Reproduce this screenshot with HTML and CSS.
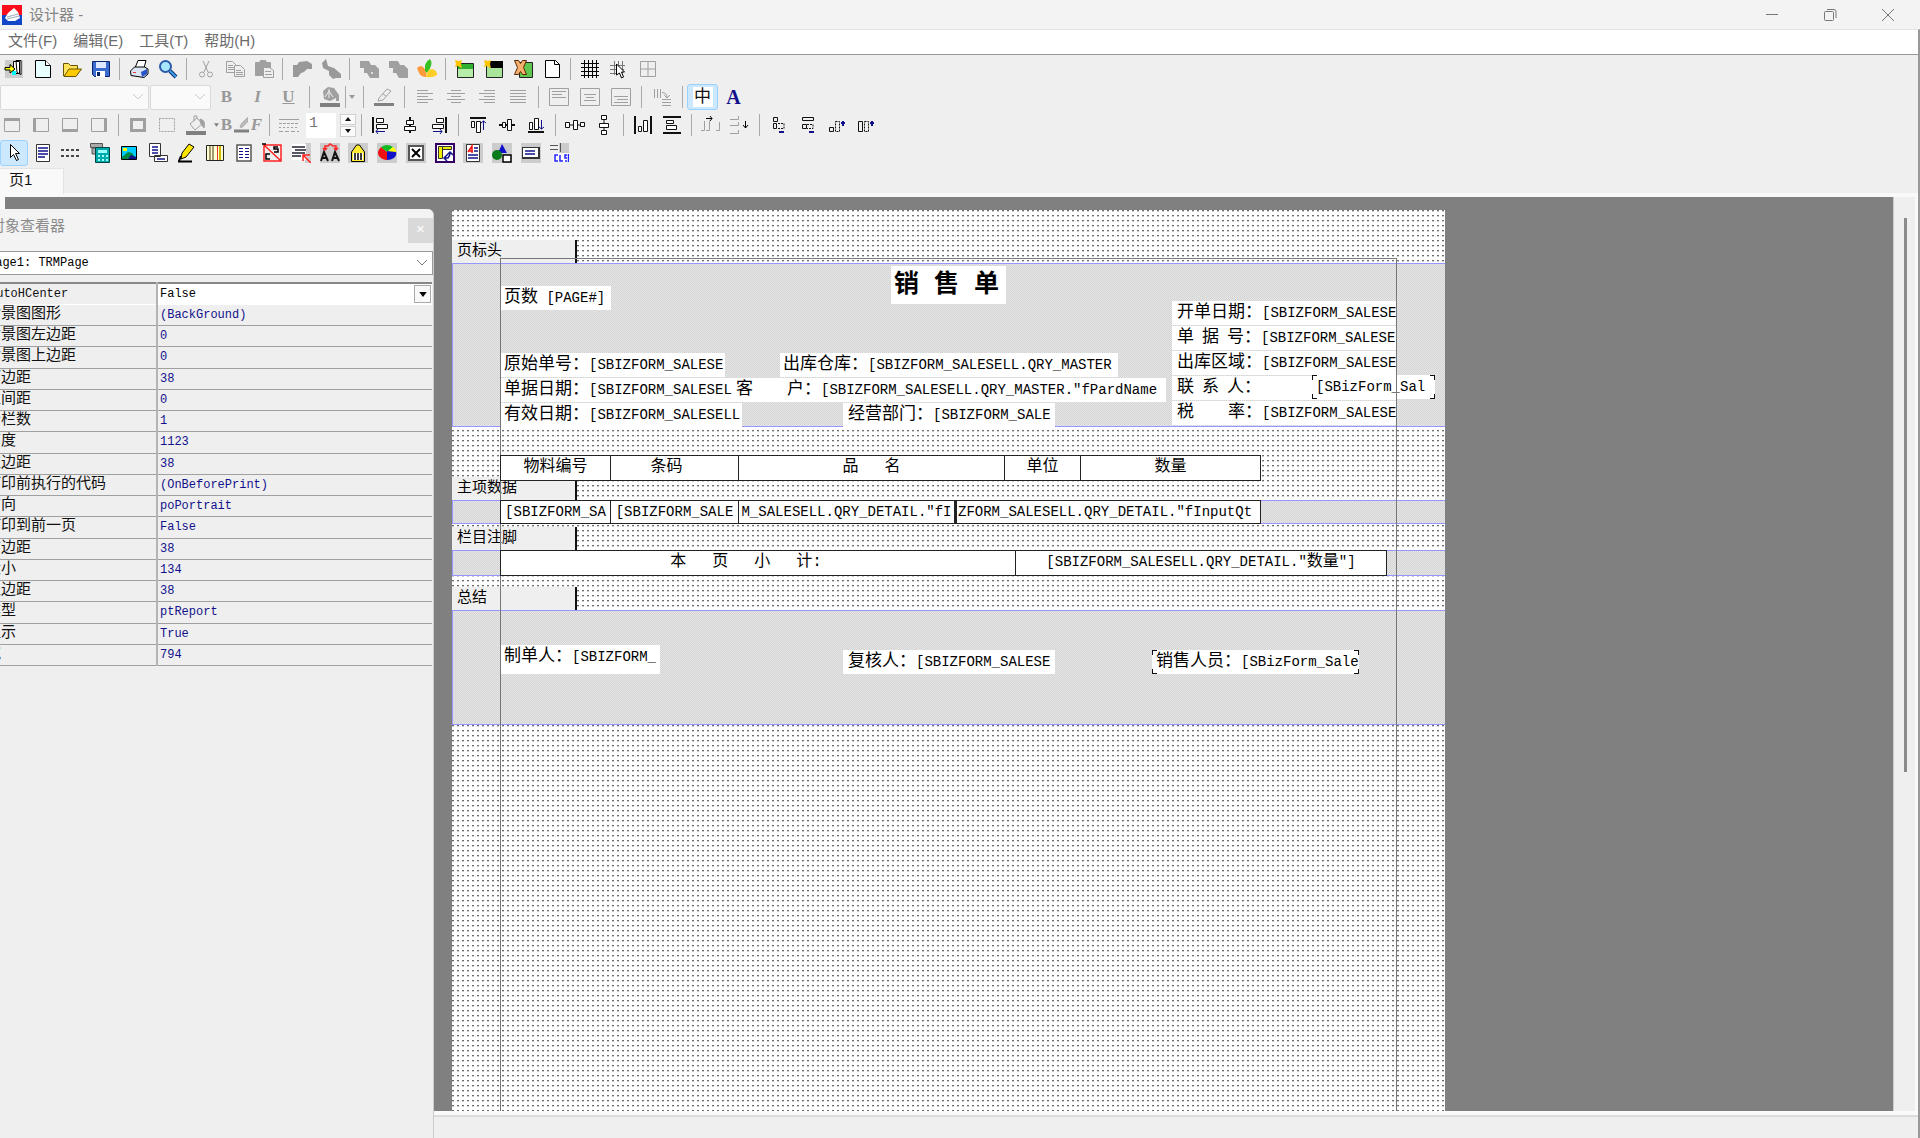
FILE: index.html
```html
<!DOCTYPE html>
<html lang="zh-CN">
<head>
<meta charset="utf-8">
<title>设计器</title>
<link rel="stylesheet" href="styles.css">
</head>
<body>
<header class="titlebar">
  <svg class="logo" viewBox="0 0 20 20"><path fill="#fb0d1b" d="M0 0h20v11H0z"/><path fill="#1446c8" d="M0 10h20v10H0z"/><path fill="#fff" d="M3 13 6 8l6-5 4 4 2 6-5 3H6z"/><path stroke="#9ab" d="m5 12 11-3M5 14l12-3"/></svg>
  <h1>设计器 -</h1>
  <div class="winbtns">
    <button aria-label="最小化"><svg class="ico" viewBox="0 0 20 20"><path stroke="#777" d="M4 9.500h12"/></svg></button>
    <button aria-label="还原"><svg class="ico" viewBox="0 0 20 20"><rect x="4.500" y="6.500" width="9" height="9" rx="1" stroke="#777"/><path stroke="#777" d="M7 4.500h7q2 0 2 2V13"/></svg></button>
    <button aria-label="关闭"><svg class="ico" viewBox="0 0 20 20"><path stroke="#777" d="m4 4 12 12M16 4 4 16"/></svg></button>
  </div>
</header>
<div class="window">
<nav class="menu"><a href="#file">文件(F)</a><a href="#edit">编辑(E)</a><a href="#tools">工具(T)</a><a href="#help">帮助(H)</a></nav>

<div class="toolbars">
  <div class="bar standard">
    <button aria-label="退出"><svg class="ico" viewBox="0 0 20 20"><path fill="#ccc" d="M1 1h18v18H1z"/><path fill="#fff" stroke="#000" d="M9.500 2.500h6v12h-6zM12 1.500h5v14l-4-2z"/><path fill="#0ff" d="M8 12h4v4H8z"/><path fill="#ff0" stroke="#000" d="M1 8.500h5v-3l5 4.500-5 4v-3H1z"/></svg></button>
    <button aria-label="新建"><svg class="ico" viewBox="0 0 20 20"><path fill="#e8ffff" stroke="#000" d="M2.500 1.500h10l5 5v12h-15z"/><path fill="#fff" stroke="#000" d="M12.500 1.500v5h5"/></svg></button>
    <button aria-label="打开"><svg class="ico" viewBox="0 0 20 20"><path fill="#ffe45a" stroke="#6b5400" d="M1.500 17V4.500h5l2 2h7V10"/><path fill="#fc0" stroke="#6b5400" d="m2 17.500 5-7.500h12.500L14 17.500z"/></svg></button>
    <button aria-label="保存"><svg class="ico" viewBox="0 0 20 20"><path fill="#3c6bd0" stroke="#0a2468" d="M1.500 2.500h17v15h-15l-2-2z"/><path fill="#dce9ff" d="M5 3h10v6H5z"/><path fill="#fff" d="M5 12h9v6H5z"/><path fill="#0a2468" d="M6 13h3v4H6z"/></svg></button>
    <i class="sep"></i>
    <button aria-label="打印"><svg class="ico" viewBox="0 0 20 20"><path fill="#fff" stroke="#000" d="M6 9 9 1.500h8L15 9"/><path fill="#dde6f5" stroke="#000" d="m1.500 12 4-4h10l3.500 2v5l-4 3.500-13-2z"/><path fill="#2856c8" d="m12 13 6-3v5l-5 3z"/><path stroke="#e33" d="M4 13.500h3"/></svg></button>
    <button aria-label="预览"><svg class="ico" viewBox="0 0 20 20"><path stroke="#123a78" stroke-width="4" d="m12 12 6 6"/><path stroke="#3c9be8" stroke-width="2" d="m12 12 6 6"/><circle cx="7.500" cy="7.500" r="5.500" fill="#a8e8ff" stroke="#2a5aa8" stroke-width="2"/></svg></button>
    <i class="sep"></i>
    <button aria-label="剪切" disabled><svg class="ico dis" viewBox="0 0 20 20"><path d="m7 2 5 11M13 2 8 13"/><circle cx="6" cy="15.500" r="2.500"/><circle cx="14" cy="15.500" r="2.500"/></svg></button>
    <button aria-label="复制" disabled><svg class="ico dis" viewBox="0 0 20 20"><path d="M1.500 2.500h6l3 3v8h-9zM3 6.500h5M3 8.500h6M3 10.500h6"/><path fill="#eee" d="M9.500 6.500h6l4 4v7h-10zM11 11.500h5M11 13.500h7M11 15.500h7"/></svg></button>
    <button aria-label="粘贴" disabled><svg class="ico dis" viewBox="0 0 20 20"><path fill="#a0a0a0" d="M1.500 3.500h4l1-2h5l1 2h4v13h-15z"/><path fill="#eee" d="M9.500 8.500h6l4 3v7h-10zM11 12.500h6M11 15.500h7"/></svg></button>
    <i class="sep"></i>
    <button aria-label="撤销" disabled><svg class="ico" viewBox="0 0 20 20"><path fill="#999" d="M1 6h4l2-3 8-1 5 3v5h-5l-3 3-3 1-3 4H1z"/></svg></button>
    <button aria-label="重做" disabled><svg class="ico" viewBox="0 0 20 20"><path fill="#999" d="m1 4 4-4 2 7 6 2 7 6v4h-5l-3 1-4-4v-4L2 9z"/></svg></button>
    <i class="sep"></i>
    <button aria-label="置前" disabled><svg class="ico" viewBox="0 0 20 20"><path fill="#a0a0a0" d="M1 2h9l2 4h4l4 4v9h-9l-3-5H5V9H1z"/><path fill="#ddd" d="M12 13h2v2h-2z"/></svg></button>
    <button aria-label="置后" disabled><svg class="ico" viewBox="0 0 20 20"><path fill="#a0a0a0" d="M1 2h9l2 4h4l4 4v9h-9l-3-5H5V9H1z"/></svg></button>
    <button aria-label="选项"><svg class="ico" viewBox="0 0 20 20"><path fill="#ff9a3c" d="M0 9q4-4 7 0 3 4 2 9-5 0-7-4z"/><path fill="#35c020" d="M8 12Q7 3 13 0q4 5-3 14z"/><path fill="#ffcf28" d="M9 18q1-8 6-8 5 1 5 6-4 3-11 2z"/></svg></button>
    <i class="sep"></i>
    <button aria-label="新报表页"><svg class="ico" viewBox="0 0 20 20"><path fill="#b4eca8" stroke="#222" d="M2.500 4.500h16v14h-16z"/><path fill="#2fae2f" d="M3 5h15v5H3z"/><path fill="#ffc400" d="m0 1 4 1 3-1-1 4 1 4-4-2-3 1 1-3z"/></svg></button>
    <button aria-label="新对话框"><svg class="ico" viewBox="0 0 20 20"><path fill="#a8e49a" stroke="#222" d="M2.500 4.500h16v14h-16z"/><path fill="#000" d="M6 2h13v7H6z"/><path fill="#ffc400" d="m0 1 4 1 3-1-1 4 1 4-4-2-3 1 1-3z"/></svg></button>
    <button aria-label="删除页"><svg class="ico" viewBox="0 0 20 20"><path fill="#60c850" stroke="#222" d="M6.500 3.500h13v15h-13z"/><path fill="#f5b070" stroke="#5a2800" d="M1.500 1.500h4l2 3 2-3h4l-3 7 3 7h-4l-2-3-2 3h-4l3-7z"/></svg></button>
    <button aria-label="页设置"><svg class="ico" viewBox="0 0 20 20"><path fill="#fff" stroke="#000" d="M3.500 1.500h10l4 4v13h-14z"/><path stroke="#000" d="M12.500 1.500v4h5"/></svg></button>
    <i class="sep"></i>
    <button aria-label="网格"><svg class="ico" viewBox="0 0 20 20"><path stroke="#000" d="M4.500 1v18M8.500 1v18M12.500 1v18M16.500 1v18M1 4.500h18M1 8.500h18M1 12.500h18M1 16.500h18"/></svg></button>
    <button aria-label="对齐网格"><svg class="ico" viewBox="0 0 20 20"><path stroke="#777" d="M5.500 2v14M9.500 2v12M13.500 2v12M1 6.500h15M1 10.500h14M1 14.500h8"/><path fill="#fff" stroke="#000" d="m7.500 5 8 8h-3l2 5-2 1-2-5-3 2z"/></svg></button>
    <button aria-label="适应网格" disabled><svg class="ico dis" viewBox="0 0 20 20"><path d="M2.500 2.500h15v15h-15zM10 3v14M3 10h14"/></svg></button>
  </div>

  <div class="bar format">
    <select class="fontname" aria-label="字体" disabled><option></option></select>
    <select class="fontsize" aria-label="字号" disabled><option></option></select>
    <button class="letter bold" disabled>B</button>
    <button class="letter ital" disabled>I</button>
    <button class="letter under" disabled>U</button>
    <i class="sep"></i>
    <button aria-label="字体颜色" disabled><svg class="ico" viewBox="0 0 20 20"><path fill="#808080" d="M0 16h20v4H0z"/><path fill="#a0a0a0" d="m3 4 5-4 6 1 5 7v6h-3v-3l-6 3-6-2z"/><path stroke="#eee" d="m5 10 4-6 4 6M9 2v9"/></svg></button>
    <button class="drop" aria-label="更多颜色" disabled><svg class="arrow" viewBox="0 0 6 4"><path fill="#999" d="M0 0h6L3 4z"/></svg></button>
    <i class="sep"></i>
    <button aria-label="高亮" disabled><svg class="ico dis" viewBox="0 0 20 20"><path fill="#808080" stroke="none" d="M0 16h20v3H0z"/><path d="m5 11 8-9 4 2-8 9-5 1z"/><path d="m9 7 3 2"/></svg></button>
    <i class="sep"></i>
    <button aria-label="左对齐" disabled><svg class="ico dis" viewBox="0 0 20 20"><path d="M2 3.500h11M2 6.500h16M2 9.500h11M2 12.500h16M2 15.500h11"/></svg></button>
    <button aria-label="居中" disabled><svg class="ico dis" viewBox="0 0 20 20"><path d="M5 3.500h10M1 6.500h18M5 9.500h10M1 12.500h18M5 15.500h10"/></svg></button>
    <button aria-label="右对齐" disabled><svg class="ico dis" viewBox="0 0 20 20"><path d="M7 3.500h11M2 6.500h16M7 9.500h11M2 12.500h16M7 15.500h11"/></svg></button>
    <button aria-label="两端对齐" disabled><svg class="ico dis" viewBox="0 0 20 20"><path d="M2 3.500h16M2 6.500h16M2 9.500h16M2 12.500h16M2 15.500h16"/></svg></button>
    <i class="sep"></i>
    <button aria-label="顶端" disabled><svg class="ico dis" viewBox="0 0 20 20"><path d="M.5 1.500h19v17H.500zM3 4.500h14M3 7.500h10M3 10.500h14"/></svg></button>
    <button aria-label="中部" disabled><svg class="ico dis" viewBox="0 0 20 20"><path d="M.5 1.500h19v17H.500zM4 7.500h12M6 10.500h8M4 13.500h12"/></svg></button>
    <button aria-label="底端" disabled><svg class="ico dis" viewBox="0 0 20 20"><path d="M.5 1.500h19v17H.500zM3 9.500h14M6 12.500h11M3 15.500h14"/></svg></button>
    <i class="sep"></i>
    <button aria-label="旋转" disabled><svg class="ico dis" viewBox="0 0 20 20"><path d="M2.500 2v9M5.500 2v9M8.500 2v9M10 5.500q5 0 5 5M12 8l3 3 3-3M10 12.500h9M10 15.500h9M10 18.500h9"/></svg></button>
    <i class="sep"></i>
    <button class="on" aria-label="中文"><span class="zhong">中</span></button>
    <button class="letter navy">A</button>
  </div>

  <div class="bar frame-tools">
    <button aria-label="上边框" disabled><svg class="ico dis" viewBox="0 0 20 20"><path d="M2.500 3.500h15v13h-15z"/><path stroke-width="3" d="M2 4.500h16"/></svg></button>
    <button aria-label="左边框" disabled><svg class="ico dis" viewBox="0 0 20 20"><path d="M2.500 3.500h15v13h-15z"/><path stroke-width="3" d="M3.500 3v14"/></svg></button>
    <button aria-label="下边框" disabled><svg class="ico dis" viewBox="0 0 20 20"><path d="M2.500 3.500h15v13h-15z"/><path stroke-width="3" d="M2 15.500h16"/></svg></button>
    <button aria-label="右边框" disabled><svg class="ico dis" viewBox="0 0 20 20"><path d="M2.500 3.500h15v13h-15z"/><path stroke-width="3" d="M16.500 3v14"/></svg></button>
    <i class="sep"></i>
    <button aria-label="全部边框" disabled><svg class="ico dis" viewBox="0 0 20 20"><path stroke-width="3" d="M3.500 4.500h13v11h-13z"/></svg></button>
    <button aria-label="无边框" disabled><svg class="ico dis" viewBox="0 0 20 20"><path stroke-dasharray="2 1" d="M2.500 3.500h15v13h-15z"/></svg></button>
    <button aria-label="填充颜色" disabled><svg class="ico dis" viewBox="0 0 20 20"><path fill="#808080" stroke="none" d="M0 16h20v4H0z"/><path d="m4 9 7-6 5 6-7 6zM8 6V1h3v3"/><path fill="#a0a0a0" d="M14 4q6 1 4 9l-3-4z"/></svg></button>
    <div class="linecolor">
      <svg class="arrow" viewBox="0 0 6 4"><path fill="#808080" d="M0 0h6L3 4z"/></svg>
      <button class="letter bold" disabled>B</button>
      <button aria-label="边框颜色" disabled><svg class="ico dis" viewBox="0 0 20 20"><path fill="#808080" stroke="none" d="M0 16h20v4H0z"/><path fill="#bbb" d="m8 13 2-5 8-8v6l-7 7z"/></svg></button>
      <button class="letter ital" disabled>F</button>
    </div>
    <i class="sep"></i>
    <button aria-label="线型" disabled><svg class="ico dis" viewBox="0 0 20 20"><path d="M0 4.500h20"/><path stroke-dasharray="3 1" d="M0 8.500h20"/><path stroke-dasharray="2 2" d="M0 12.500h20"/><path stroke-dasharray="4 2" d="M0 16.500h20"/></svg></button>
    <input class="width" aria-label="线宽" value="1">
    <div class="spin"><button aria-label="增加"><svg class="arrow" viewBox="0 0 6 4"><path fill="#111" d="M3 0l3 4H0z"/></svg></button><button aria-label="减少"><svg class="arrow" viewBox="0 0 6 4"><path fill="#111" d="M0 0h6L3 4z"/></svg></button></div>
    <i class="sep"></i>
    <button aria-label="左对齐对象"><svg class="ico blk" viewBox="0 0 20 20"><path stroke-width="2" d="M2 2v16"/><path fill="#fff" d="M5.500 3.500h7v4h-7zM5.500 9.500h11v4h-11z"/><path stroke="#11118c" d="M5 16.500h9M7 14l-2 2.500L7 19"/></svg></button>
    <button aria-label="水平居中对象"><svg class="ico blk" viewBox="0 0 20 20"><path stroke-width="2" d="M10 2v16"/><path fill="#fff" d="M6.500 5.500h7v4h-7zM4.500 11.500h11v4h-11z"/></svg></button>
    <button aria-label="右对齐对象"><svg class="ico blk" viewBox="0 0 20 20"><path stroke-width="2" d="M17 2v16"/><path fill="#fff" d="M7.500 3.500h7v4h-7zM3.500 9.500h11v4h-11z"/><path stroke="#11118c" d="M4 16.500h9M11 14l2 2.500-2 2.500"/></svg></button>
    <i class="sep"></i>
    <button aria-label="顶端对齐对象"><svg class="ico blk" viewBox="0 0 20 20"><path stroke-width="2" d="M2 3h16"/><path fill="#fff" d="M3.500 6.500h3v6h-3zM8.500 6.500h4v11h-4z"/><path stroke="#11118c" d="M15.500 6v9M13 8l2.500-2L18 8"/></svg></button>
    <button aria-label="垂直居中对象"><svg class="ico blk" viewBox="0 0 20 20"><path stroke-width="2" d="M2 10h16"/><path fill="#fff" d="M5.500 7.500h3v5h-3zM10.500 4.500h4v11h-4z"/></svg></button>
    <button aria-label="底端对齐对象"><svg class="ico blk" viewBox="0 0 20 20"><path stroke-width="2" d="M2 17h16"/><path fill="#fff" d="M3.500 7.500h3v7h-3zM8.500 3.500h4v11h-4z"/><path stroke="#11118c" d="M15.500 5v9M13 12l2.500 2 2.500-2"/></svg></button>
    <i class="sep"></i>
    <button aria-label="水平等距"><svg class="ico blk" viewBox="0 0 20 20"><path d="M0 10h20"/><path fill="#fff" d="M.5 7.500h4v5h-4zM8.500 5.500h4v9h-4zM15.500 7.500h4v4h-4z"/></svg></button>
    <button aria-label="垂直等距"><svg class="ico blk" viewBox="0 0 20 20"><path d="M10 1v18"/><path fill="#fff" d="M7.500.500h5v4h-5zM5.500 8.500h9v4h-9zM7.500 15.500h5v4h-5z"/></svg></button>
    <i class="sep"></i>
    <button aria-label="页面水平居中"><svg class="ico blk" viewBox="0 0 20 20"><path stroke-width="2" d="M2 1v18M18 1v18"/><path fill="#fff" d="M5.500 11.500h3v5h-3zM10.500 5.500h4v11h-4z"/></svg></button>
    <button aria-label="页面垂直居中"><svg class="ico blk" viewBox="0 0 20 20"><path stroke-width="2" d="M1 2h18M1 18h18"/><path fill="#fff" d="M4.500 5.500h7v3h-7zM4.500 10.500h10v4h-10z"/></svg></button>
    <i class="sep"></i>
    <button aria-label="水平间距" disabled><svg class="ico dis" viewBox="0 0 20 20"><path d="M0 15.500h3.500V6M5 15.500h3.500V6M15 15.500h3.500V7"/><path stroke="#000" d="M5 3.500h6M9 1l2 2.500L9 6"/></svg></button>
    <button aria-label="垂直间距" disabled><svg class="ico dis" viewBox="0 0 20 20"><path d="M0 4.500h8.500V1M0 10.500h8.500V7M0 18.500h8.500V15"/><path stroke="#000" d="M15.500 6v7M13 10l2.500 3 2.500-3"/></svg></button>
    <i class="sep"></i>
    <button aria-label="同宽缩小"><svg class="ico blk" viewBox="0 0 20 20"><path d="M4.500 2.500h4v4h-4zM4.500 8.500h3v5h-3z"/><path stroke-dasharray="2 1" d="M9 8.500h6v5H8"/><path stroke="#11118c" stroke-width="2" d="M10 17h5"/></svg></button>
    <button aria-label="同宽放大"><svg class="ico blk" viewBox="0 0 20 20"><path d="M4.500 2.500h11v3h-11zM4.500 9.500h4v4h-4z"/><path stroke-dasharray="2 1" d="M9 9.500h6v4H9"/><path stroke="#11118c" stroke-width="2" d="M11 17h5"/></svg></button>
    <button aria-label="同高缩小"><svg class="ico blk" viewBox="0 0 20 20"><path d="M2.500 12.500h4v4h-4z"/><path stroke-dasharray="2 1" d="M8.500 6.500h4v10h-4z"/><path stroke="#11118c" stroke-width="2" d="M16 6v5M14 8h4"/></svg></button>
    <button aria-label="同高放大"><svg class="ico blk" viewBox="0 0 20 20"><path d="M2.500 6.500h4v10h-4z"/><path stroke-dasharray="2 1" d="M8.500 6.500h4v10h-4z"/><path stroke="#11118c" stroke-width="2" d="M16 6v5M14 8h4"/></svg></button>
  </div>

  <div class="bar objects">
    <button class="on" aria-label="选择"><svg class="ico" viewBox="0 0 20 20"><path fill="#fff" stroke="#000" d="M6.500 1.500v13l3-3 3 6 2-1-3-6h4z"/></svg></button>
    <button aria-label="文本"><svg class="ico" viewBox="0 0 20 20"><path fill="#fff" stroke="#333" d="M3.500 1.500h13v17h-13z"/><path stroke="#11118c" stroke-width="1.500" d="M5 5h10M5 8h10M5 11h10M5 14h7"/></svg></button>
    <button aria-label="数据带"><svg class="ico blk" viewBox="0 0 20 20"><path stroke-dasharray="3 2" stroke-width="1.500" d="M0 7h20M0 13h20"/></svg></button>
    <button aria-label="计算"><svg class="ico" viewBox="0 0 20 20"><path fill="#aaa" stroke="#555" d="M.5.500h12v4H.500zM2 5h4v6H2z"/><path fill="#0aa" stroke="#044" d="M5.500 4.500h14v15h-14z"/><path fill="#9ff" d="M8 7h9v3H8z"/><path stroke="#9ff" stroke-dasharray="2 2" stroke-width="2" d="M8 13h10M8 17h10"/></svg></button>
    <button aria-label="图片"><svg class="ico" viewBox="0 0 20 20"><path fill="#0cf" stroke="#000" d="M2.500 3.500h15v13h-15z"/><path fill="#ff0" d="M4 5h4v3H4z"/><path fill="#084" d="m3 14 6-5 4 1 4 6H3z"/><path fill="#11118c" d="m9 16 3-4 5 2v2z"/></svg></button>
    <button aria-label="子报表"><svg class="ico" viewBox="0 0 20 20"><path fill="#fff" stroke="#333" d="M1.500.500h11v13h-11zM6.500 12.500h13v6h-13z"/><path stroke="#11118c" stroke-width="1.500" d="M4 4h6M4 7h6M4 10h6M9 16h8"/></svg></button>
    <button aria-label="画线"><svg class="ico" viewBox="0 0 20 20"><path fill="#ffe600" stroke="#000" d="m6 10 7-9 5 3-8 10-5 2z"/><path stroke="#000" stroke-width="2" d="M2 18.500h14M5 13l-2 5"/></svg></button>
    <button aria-label="条码"><svg class="ico" viewBox="0 0 20 20"><path fill="#ffffd0" stroke="#222" d="M1.500 2.500h17v15h-17z"/><path stroke="#875" stroke-width="1.500" d="M5 3v14M8 3v14"/><path stroke="#e33" d="M12.500 3v14"/><path stroke="#cb0" stroke-width="2" d="M15 3v14"/></svg></button>
    <button aria-label="富文本"><svg class="ico" viewBox="0 0 20 20"><path fill="#fff" stroke="#555" stroke-width="1.500" d="M3 2h14v16H3z"/><path stroke="#11118c" stroke-dasharray="4 2" d="M5 5.500h10M5 8.500h10M5 11.500h10M5 14.500h10"/></svg></button>
    <button aria-label="交叉表"><svg class="ico" viewBox="0 0 20 20"><path fill="#eee" stroke="#f22" stroke-width="1.500" d="M2 2h17v16H2zM2 2l17 16"/><path stroke="#000" stroke-width="1.500" d="M8 11H4v5h4M16 4h-4v2h4v3h-4M0 1h4"/></svg></button>
    <button aria-label="溢出文本"><svg class="ico" viewBox="0 0 20 20"><path fill="#ccc" d="M14 0h6v20h-6z"/><path fill="#fff" d="M1 1h14v16H1z"/><path stroke="#223" stroke-width="1.500" d="M1 4h13M4 7h11M1 10h13M1 13h9"/><path stroke="#f22" stroke-width="1.500" d="m12 12 8 8M12 18v-6h7"/></svg></button>
    <button aria-label="旋转文字"><svg class="ico" viewBox="0 0 20 20"><path fill="#ccc" d="M0 0h20v20H0z"/><path stroke="#111" stroke-width="2" d="m1 18 3-9 4 9M2 15h5M12 18l3-9 4 9M13 15h5"/><path stroke="#f22" stroke-width="1.500" d="M5 7V3h3l2-2 3 2h3v4M3 5l2 2 2-2M14 5l2 2 2-2"/></svg></button>
    <button aria-label="码库"><svg class="ico" viewBox="0 0 20 20"><path fill="#ccc" d="M0 0h20v20H0z"/><path fill="#ffec30" stroke="#000" d="m3.500 9 5-7h3l5 7v9.500h-13z"/><path fill="#fff" d="M5 10h10v7H5z"/><path stroke="#000" stroke-width="1.500" d="M7 10v7M10 10v7M13 10v7"/></svg></button>
    <button aria-label="图表"><svg class="ico" viewBox="0 0 20 20"><path fill="#ccc" d="M0 0h20v20H0z"/><path fill="#e11" d="M10 9 4 4Q-1 9 2 13q3 4 8 4z"/><path fill="#1b2" d="M10 9 4 4q6-4 12 0z"/><path fill="#ff0" d="m10 9 6-5q4 3 3 6z"/><path fill="#11c" d="M10 8l9 1q1 3-2 6-3 2-7 2z"/></svg></button>
    <button aria-label="复选框"><svg class="ico" viewBox="0 0 20 20"><path fill="#ccc" d="M0 0h20v20H0z"/><path fill="#fff" stroke="#555" stroke-width="2" d="M3 3h14v14H3z"/><path stroke="#000" stroke-width="2" d="m6 6 8 8M14 6l-8 8"/></svg></button>
    <button aria-label="矩阵"><svg class="ico" viewBox="0 0 20 20"><path fill="#fff" stroke="#306" stroke-width="2" d="M1 1h18v18H1z"/><path fill="#ee0" stroke="#333" d="M3.500 3.500h4v12h-4zM7.500 3.500h9v3h-9z"/><path stroke="#11118c" stroke-width="1.500" d="M9 15h4q2-2 2-5M12 12l3-3 3 3M12 12l-3 3 3 3"/></svg></button>
    <button aria-label="RTF"><svg class="ico" viewBox="0 0 20 20"><path fill="#ccc" d="M0 0h20v20H0z"/><path fill="#fff" stroke="#333" d="M3.500 1.500h13v17h-13z"/><path stroke="#e11" stroke-width="1.500" d="m5 9 4-6v7M5 8h5"/><path stroke="#11118c" stroke-width="1.500" d="M11 5h4M11 8h4M5 12h10M5 15h10"/></svg></button>
    <button aria-label="图形"><svg class="ico" viewBox="0 0 20 20"><path fill="#ccc" d="M0 0h20v20H0z"/><path fill="#11c" d="m10 1 5 9H6z"/><circle cx="5" cy="12" r="5" fill="#0a7a1a"/><path fill="#fff" stroke="#000" stroke-width="1.500" d="M11 12h8v7h-8z"/></svg></button>
    <button aria-label="按钮"><svg class="ico" viewBox="0 0 20 20"><path fill="#ccc" d="M0 0h20v20H0z"/><path fill="#333" d="M1 4h18v12H1z"/><path fill="#fff" d="M2 5h15v9H2z"/><path stroke="#11118c" stroke-width="1.500" d="M4 8h10M4 11h10"/></svg></button>
    <button aria-label="控件"><svg class="ico" viewBox="0 0 20 20"><path fill="#ccc" d="M10 0h10v10H10z"/><path stroke="#555" d="M1 2.500h8M1 6.500h8M11.500 0v9"/><path fill="#fff" d="M4 10h16v9H4z"/><path stroke="#22f" stroke-width="1.500" d="M9 12H6v6h3M11 12v6h3M18 12h-2v3h2M16 18h2M19.500 11v8"/></svg></button>
  </div>
</div>

<div class="tabs"><button class="tab">页1</button></div>

<main class="workspace">
  <div class="canvas">
    <div class="sheet">
      <section class="band b-head">
        <h2 class="bandtab">页标头</h2>
        <div class="area">
          <div class="obj pageno"><span class="cap">页数</span> [PAGE#]</div>
          <div class="obj doctitle">销 售 单</div>
          <div class="obj orig"><span class="cap">原始单号：</span>[SBIZFORM_SALESE</div>
          <div class="obj store"><span class="cap">出库仓库：</span>[SBIZFORM_SALESELL.QRY_MASTER</div>
          <div class="obj date"><span class="cap">单据日期：</span>[SBIZFORM_SALESEL</div>
          <div class="obj client"><span class="cap">客　　户：</span>[SBIZFORM_SALESELL.QRY_MASTER."fPardName</div>
          <div class="obj valid"><span class="cap">有效日期：</span>[SBIZFORM_SALESELL</div>
          <div class="obj dept"><span class="cap">经营部门：</span>[SBIZFORM_SALE</div>
          <div class="fields">
            <div><span class="cap">开单日期：</span>[SBIZFORM_SALESE</div>
            <div><span class="cap trio"><span>单</span><span>据</span><span>号：</span></span>[SBIZFORM_SALESE</div>
            <div><span class="cap">出库区域：</span>[SBIZFORM_SALESE</div>
            <div><span class="cap trio"><span>联</span><span>系</span><span>人：</span></span></div>
            <div><span class="cap">税　　率：</span>[SBIZFORM_SALESE</div>
          </div>
          <div class="obj corners contact">[SBizForm_Sal</div>
        </div>
      </section>
      <section class="band b-main">
        <div class="row headings"><span>物料编号</span><span class="code">条码</span><span class="wide"><b>品</b><b>名</b></span><span>单位</span><span>数量</span></div>
        <h2 class="bandtab">主项数据</h2>
        <div class="area">
          <div class="row detail"><span>[SBIZFORM_SA</span><span>[SBIZFORM_SALE</span><span>M_SALESELL.QRY_DETAIL."fI</span><span class="qty">ZFORM_SALESELL.QRY_DETAIL."fInputQt</span></div>
        </div>
      </section>
      <section class="band b-foot">
        <h2 class="bandtab">栏目注脚</h2>
        <div class="area">
          <div class="row subtotal"><span class="wide"><b>本</b><b>页</b><b>小</b><b>计:</b></span><span>[SBIZFORM_SALESELL.QRY_DETAIL."<b>数量</b>"]</span></div>
        </div>
      </section>
      <section class="band b-sum">
        <h2 class="bandtab">总结</h2>
        <div class="area">
          <div class="obj maker"><span class="cap">制单人：</span>[SBIZFORM_</div>
          <div class="obj checker"><span class="cap">复核人：</span>[SBIZFORM_SALESE</div>
          <div class="obj corners seller"><span class="cap">销售人员：</span>[SBizForm_Sale</div>
        </div>
      </section>
      <div class="margins"></div>
    </div>
  </div>
  <div class="scroll"><div class="thumb"></div></div>
</main>
<footer class="status"></footer>
</div>

<aside class="inspector">
  <div class="itop"><h2>对象查看器</h2><button aria-label="关闭查看器">×</button></div>
  <select class="target" aria-label="对象"><option>Page1: TRMPage</option></select>
  <table class="props">
    <tr class="cur"><th>AutoHCenter</th><td>False<button aria-label="选择值"><svg class="arrow" viewBox="0 0 6 4"><path fill="#000" d="M0 0h6L3 4z"/></svg></button></td></tr>
    <tr><th>背景图图形</th><td>(BackGround)</td></tr>
    <tr><th>背景图左边距</th><td>0</td></tr>
    <tr><th>背景图上边距</th><td>0</td></tr>
    <tr><th>下边距</th><td>38</td></tr>
    <tr><th>栏间距</th><td>0</td></tr>
    <tr><th>分栏数</th><td>1</td></tr>
    <tr><th>高度</th><td>1123</td></tr>
    <tr><th>左边距</th><td>38</td></tr>
    <tr><th>打印前执行的代码</th><td>(OnBeforePrint)</td></tr>
    <tr><th>方向</th><td>poPortrait</td></tr>
    <tr><th>打印到前一页</th><td>False</td></tr>
    <tr><th>右边距</th><td>38</td></tr>
    <tr><th>大小</th><td>134</td></tr>
    <tr><th>上边距</th><td>38</td></tr>
    <tr><th>类型</th><td>ptReport</td></tr>
    <tr><th>显示</th><td>True</td></tr>
    <tr><th>宽</th><td>794</td></tr>
  </table>
</aside>
</body>
</html>
```

FILE: styles.css
```css
* { box-sizing: border-box; }
body {
  margin: 0;
  height: 100vh;
  display: flex;
  flex-direction: column;
  position: relative;
  overflow: hidden;
  background: #efefef;
  color: #111;
  font: 15px/20px "Liberation Sans", "Noto Sans CJK SC", sans-serif;
}
h1, h2 { margin: 0; font-size: 15px; font-weight: 400; }
button { padding: 0; border: 0; background: none; color: inherit; font: inherit; }
svg { fill: none; display: block; }
.ico { width: 20px; height: 20px; }
.ico.dis { stroke: #a0a0a0; }
.ico.blk { stroke: #111; }
.arrow { width: 6px; height: 4px; }

/* title bar and menu */
.titlebar {
  flex: none;
  height: 29px;
  display: flex;
  align-items: center;
  padding-left: 2px;
  background: #f3f3f3;
  color: #858585;
}
.logo { width: 20px; height: 20px; margin-right: 7px; }
.titlebar h1 { flex: 1; }
.winbtns { display: flex; padding-right: 3px; }
.winbtns button { width: 58px; display: flex; justify-content: center; }
.window {
  flex: 1;
  min-height: 0;
  display: flex;
  flex-direction: column;
  border-right: 2px solid #999;
  border-top: 1px solid #e2e2e2;
}
.menu {
  flex: none;
  height: 25px;
  display: flex;
  align-items: center;
  gap: 16px;
  padding: 0 0 2px 8px;
  background: #fff;
  border-bottom: 1px solid #999;
}
.menu a { color: #6b6b6b; text-decoration: none; }

/* toolbars */
.toolbars { flex: none; display: flex; flex-direction: column; }
.bar { height: 28px; display: flex; align-items: center; }
.bar button { width: 29px; height: 26px; flex: none; display: flex; align-items: center; justify-content: center; }
.sep { flex: none; width: 10px; height: 22px; background: linear-gradient(#aaa, #aaa) center / 1px 100% no-repeat; }
.standard .sep { width: 9px; }
.standard { margin-left: -1px; }
.frame-tools { margin-left: -3px; }
.format button { width: 31px; }
.format .drop { width: 13px; height: 22px; border-left: 1px solid #aaa; }
.format select {
  appearance: none;
  height: 25px;
  border: 1px solid #d0d0d0;
  border-radius: 2px;
  background: #fff url("data:image/svg+xml,%3Csvg xmlns='http://www.w3.org/2000/svg' width='12' height='8'%3E%3Cpath d='M1 1l5 5 5-5' fill='none' stroke='%23bbb'/%3E%3C/svg%3E") right 4px center no-repeat;
}
.format .fontname { width: 149px; margin: 0 1px 0 0; }
.format .fontsize { width: 61px; margin: 0; }
.bar .letter { font: bold 17px/20px "Liberation Serif", serif; color: #999; }
.bar .ital { font-style: italic; }
.bar .under { text-decoration: underline; }
.bar .navy { color: #11118c; font-size: 20px; }
.bar .on { background: #cce8ff; border: 1px solid #99d1ff; border-radius: 3px; }
.zhong { width: 20px; height: 20px; background: #fff; font-size: 17px; line-height: 20px; }
.linecolor { width: 54px; display: flex; align-items: center; padding-left: 4px; }
.linecolor button { width: 15px; }
.linecolor .ico { width: 18px; }
.width { width: 30px; height: 25px; margin: 0 4px 0 3px; padding: 0 3px 3px; border: 0; background: #fff; color: #777; font: 15px "Liberation Mono", monospace; }
.spin { width: 16px; display: flex; flex-direction: column; gap: 1px; }
.spin button { width: 16px; height: 11px; background: #fafafa; border: 1px solid #d0d0d0; }
.objects { display: grid; grid-template-columns: repeat(20, 1fr); width: 574px; }
.objects button { width: 28px; }

/* page tabs */
.tabs { flex: none; height: 30px; padding-top: 1px; border-bottom: 4px solid #f9f9f9; }
.tab { width: 64px; height: 26px; padding: 0 0 4px 9px; background: #f9f9f9; border: 1px solid #e4e4e4; border-width: 1px 1px 0 0; text-align: left; }

/* workspace */
.workspace { flex: 1; min-height: 0; display: flex; padding-left: 5px; background: #f9f9f9; }
.canvas { flex: 1; overflow: hidden; background: #808080; padding: 13px 0 0 447px; }
.scroll { width: 25px; padding: 21px 0 0 10px; border-left: 1px solid #ccc; border-right: 3px solid #f9f9f9; background: #efefef; }
.thumb { width: 3px; height: 62%; background: #8a8a8a; }
.status { flex: none; height: 27px; background: #efefef; border-top: 4px solid #fafafa; box-shadow: inset 0 2px #dcdcdc; }

/* report sheet */
.sheet {
  position: relative;
  width: 993px;
  height: 1404px;
  padding-top: 30px;
  background:
    linear-gradient(90deg, transparent 2px, #fff 2px) 0 0 / 5px 5px,
    linear-gradient(#6c6c6c 1px, #ccc 1px, #ccc 2px, #fff 2px) 0 0 / 5px 5px;
  font: 14px/24px "Liberation Mono", "Noto Sans CJK SC", monospace;
  color: #000;
}
.band { position: relative; }
.bandtab { width: 125px; height: 23px; padding-left: 5px; line-height: 17px; background: #efefef; border-right: 2px solid #111; font-family: "Noto Sans CJK SC", sans-serif; }
.area {
  position: relative;
  border: 1px solid #9696ff;
  border-right: 0;
  background: repeating-conic-gradient(#d4d4d4 0 25%, #e6e6e6 0 50%) 0 0 / 2px 2px;
}
.b-head .area { height: 164px; }
.b-main { padding-top: 50px; }
.b-main .area { height: 24px; }
.b-foot { padding-top: 3px; }
.b-foot .area { height: 26px; }
.b-sum { padding-top: 11px; }
.b-sum .area { height: 115px; }
.margins { position: absolute; left: 48px; right: 48px; top: 48px; bottom: 48px; border: 1px solid #777; }

/* objects placed on the report canvas */
.obj { position: absolute; height: 24px; padding-left: 3px; overflow: hidden; white-space: pre; background: #fff; }
.cap { font-size: 17px; }
.trio { display: inline-flex; gap: 8px; }
.pageno { left: 48px; top: 22px; width: 110px; }
.doctitle { left: 438px; top: 2px; width: 115px; height: 38px; font-size: 25px; font-weight: 700; line-height: 40px; }
.orig { left: 48px; top: 89px; width: 224px; }
.store { left: 327px; top: 89px; width: 338px; }
.date { left: 48px; top: 114px; width: 234px; }
.client { left: 280px; top: 114px; width: 433px; }
.valid { left: 48px; top: 139px; width: 241px; }
.dept { left: 390px; top: 139px; width: 212px; padding-left: 5px; }
.fields { position: absolute; left: 719px; top: 37px; width: 225px; display: grid; grid-auto-rows: 24px; gap: 1px; }
.fields div { padding-left: 5px; background: #fff; overflow: hidden; white-space: nowrap; }
.contact { left: 859px; top: 111px; width: 123px; }
.corners {
  padding-left: 4px;
  background:
    linear-gradient(#111, #111) 0 0 / 5px 1px, linear-gradient(#111, #111) 0 0 / 1px 5px,
    linear-gradient(#111, #111) 100% 0 / 5px 1px, linear-gradient(#111, #111) 100% 0 / 1px 5px,
    linear-gradient(#111, #111) 0 100% / 5px 1px, linear-gradient(#111, #111) 0 100% / 1px 5px,
    linear-gradient(#111, #111) 100% 100% / 5px 1px, linear-gradient(#111, #111) 100% 100% / 1px 5px, #fff;
  background-repeat: no-repeat;
}
.maker { left: 48px; top: 34px; width: 159px; height: 29px; }
.checker { left: 390px; top: 39px; width: 212px; padding-left: 5px; }
.seller { left: 699px; top: 39px; width: 207px; }

.row { position: absolute; left: 48px; display: grid; background: #fff; border: 1px solid #222; line-height: 22px; z-index: 1; }
.row span { overflow: hidden; text-align: center; white-space: nowrap; border-left: 1px solid #222; }
.row span:first-child { border-left: 0; }
.row b { font-size: 16px; font-weight: 400; }
.row .wide { display: flex; justify-content: center; gap: 26px; }
.headings { top: 28px; width: 761px; height: 26px; grid-template-columns: 109px 128px 266px 76px 1fr; font-size: 16px; }
.row .code { padding-right: 16px; }
.detail, .subtotal { left: 47px; top: -1px; }
.detail { width: 761px; height: 24px; grid-template-columns: 109px 128px 216px 1fr; }
.row .qty { border-left-width: 3px; padding-left: 1px; text-align: left; }
.subtotal { width: 887px; height: 26px; grid-template-columns: 514px 1fr; }
.subtotal .wide { padding-right: 24px; }

/* object inspector, floating over the workspace */
.inspector {
  position: absolute;
  left: -16px;
  top: 209px;
  bottom: 0;
  width: 450px;
  background: #efefef;
  border-right: 1px solid #ccc;
  border-radius: 0 6px 0 0;
  font: 12px/20px "Liberation Mono", "Noto Sans CJK SC", monospace;
}
.itop { height: 42px; display: flex; justify-content: space-between; padding: 9px 0 0 6px; background: #f3f3f3; border-radius: 0 6px 0 0; }
.itop h2 { color: #8c8c8c; }
.itop button { width: 25px; height: 25px; background: #d9d9d9; color: #fff; font-size: 15px; }
.target {
  appearance: none;
  display: block;
  width: 100%;
  height: 24px;
  padding: 0 0 0 3px;
  border: 1px solid #999;
  border-radius: 0;
  background: #fff url("data:image/svg+xml,%3Csvg xmlns='http://www.w3.org/2000/svg' width='12' height='8'%3E%3Cpath d='M1 1l5 5 5-5' fill='none' stroke='%23777'/%3E%3C/svg%3E") right 4px center no-repeat;
  color: #000;
  font: inherit;
}
.props { width: 448px; height: 384px; margin-top: 7px; border-collapse: collapse; table-layout: fixed; border-top: 2px solid #888; }
.props th, .props td { height: 21px; padding: 0 0 0 2px; line-height: 18px; font-weight: 400; text-align: left; border-bottom: 1px solid #a0a0a0; white-space: nowrap; }
.props th { width: 173px; font-size: 15px; border-right: 2px solid #b4b4b4; }
.props td { color: #11118c; }
.props .cur th { font-size: 12px; padding-left: 5px; border-bottom-color: #fff; }
.props .cur td { position: relative; color: #000; background: #fff; border-bottom-color: #fff; }
.props button { position: absolute; right: 1px; top: 1px; width: 17px; height: 18px; display: flex; align-items: center; justify-content: center; background: #f8f8f8; border: 1px solid #aaa; }
.props .arrow { width: 8px; height: 5px; }
```
